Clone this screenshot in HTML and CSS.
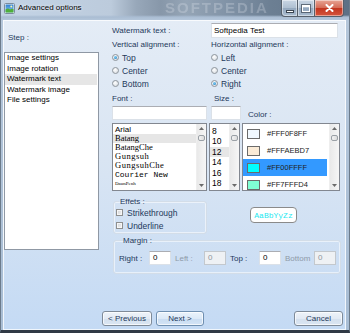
FILE: index.html
```html
<!DOCTYPE html>
<html>
<head>
<meta charset="utf-8">
<title>Advanced options</title>
<link rel="stylesheet" href="styles.css">
</head>
<body>
<div class="window">
  <div class="titlebar">
    <svg class="app-icon" width="11" height="11" viewBox="0 0 11 11">
      <defs>
        <linearGradient id="sky" x1="0" y1="0" x2="0" y2="1">
          <stop offset="0" stop-color="#2f7fd0"/>
          <stop offset="1" stop-color="#8fd0f2"/>
        </linearGradient>
      </defs>
      <rect x="0.5" y="0.5" width="10" height="10" rx="1" fill="#f4f7fa" stroke="#7c8c9c"/>
      <rect x="1.5" y="1.5" width="8" height="8" fill="url(#sky)"/>
      <path d="M1.5 9.5 L1.5 6.5 Q4 4.6 6 6.4 Q7.8 5.2 9.5 6 L9.5 9.5 Z" fill="#4fae3a"/>
      <circle cx="7.3" cy="3.4" r="1" fill="#fff6b0"/>
    </svg>
    <span class="title">Advanced options</span>
    <span class="glass-mark">SOFTPEDIA</span>
    <div class="caption-buttons">
      <div class="cbtn cmin"><span class="min-glyph"></span></div>
      <div class="cbtn cmax"><span class="max-glyph"></span></div>
      <div class="cbtn cclose">
        <svg width="9" height="8" viewBox="0 0 9 8"><path d="M1.5 1 L7.5 7 M7.5 1 L1.5 7" stroke="#fff" stroke-width="2" stroke-linecap="round"/></svg>
      </div>
    </div>
  </div>
  <div class="frame">
    <div class="client">
      <div class="main">
        <div class="left">
          <div class="step-label">Step :</div>
          <ul class="steps">
            <li>Image settings</li>
            <li>Image rotation</li>
            <li class="sel">Watermark text</li>
            <li>Watermark image</li>
            <li>File settings</li>
          </ul>
        </div>
        <div class="right">
          <div class="row-wm">
            <div class="lbl">Watermark text :</div>
            <div class="textbox">Softpedia Test</div>
          </div>
          <div class="row-align">
            <div class="col">
              <div class="lbl">Vertical alignment :</div>
              <div class="radio"><span class="rb on"></span>Top</div>
              <div class="radio"><span class="rb"></span>Center</div>
              <div class="radio"><span class="rb"></span>Bottom</div>
            </div>
            <div class="col">
              <div class="lbl">Horizontal alignment :</div>
              <div class="radio"><span class="rb"></span>Left</div>
              <div class="radio"><span class="rb"></span>Center</div>
              <div class="radio"><span class="rb on"></span>Right</div>
            </div>
          </div>
          <div class="row-fontlbl">
            <div class="lbl">Font :</div>
            <div class="lbl size-lbl">Size :</div>
          </div>
          <div class="row-inputs">
            <div class="textbox"></div>
            <div class="textbox"></div>
            <div class="lbl color-lbl">Color :</div>
          </div>
          <div class="row-lists">
            <div class="listbox">
              <ul class="items font-items">
                <li class="f-arial">Arial</li>
                <li class="f-batang sel">Batang</li>
                <li class="f-batang">BatangChe</li>
                <li class="f-gung">Gungsuh</li>
                <li class="f-gung">GungsuhChe</li>
                <li class="f-courier">Courier New</li>
                <li class="f-daun">DaunPenh</li>
              </ul>
              <div class="vscroll">
                <div class="arr"><svg width="5" height="3" viewBox="0 0 5 3"><path d="M0 3 L2.5 0 L5 3 Z" fill="#6b6b6b"/></svg></div>
                <div class="thumb"></div>
                <div class="track"></div>
                <div class="arr"><svg width="5" height="3" viewBox="0 0 5 3"><path d="M0 0 L2.5 3 L5 0 Z" fill="#6b6b6b"/></svg></div>
              </div>
            </div>
            <div class="listbox">
              <ul class="items size-items">
                <li>8</li>
                <li>10</li>
                <li class="sel">12</li>
                <li>14</li>
                <li>16</li>
                <li>18</li>
              </ul>
              <div class="vscroll">
                <div class="arr"><svg width="5" height="3" viewBox="0 0 5 3"><path d="M0 3 L2.5 0 L5 3 Z" fill="#6b6b6b"/></svg></div>
                <div class="thumb"></div>
                <div class="track"></div>
                <div class="arr"><svg width="5" height="3" viewBox="0 0 5 3"><path d="M0 0 L2.5 3 L5 0 Z" fill="#6b6b6b"/></svg></div>
              </div>
            </div>
            <div class="listbox">
              <ul class="items color-items">
                <li><span class="swatch" style="background:#F0F8FF"></span>#FFF0F8FF</li>
                <li><span class="swatch" style="background:#FAEBD7"></span>#FFFAEBD7</li>
                <li class="csel"><span class="swatch" style="background:#00FFFF"></span>#FF00FFFF</li>
                <li><span class="swatch" style="background:#7FFFD4"></span>#FF7FFFD4</li>
              </ul>
              <div class="vscroll">
                <div class="arr"><svg width="5" height="3" viewBox="0 0 5 3"><path d="M0 3 L2.5 0 L5 3 Z" fill="#6b6b6b"/></svg></div>
                <div class="thumb"></div>
                <div class="track"></div>
                <div class="arr"><svg width="5" height="3" viewBox="0 0 5 3"><path d="M0 0 L2.5 3 L5 0 Z" fill="#6b6b6b"/></svg></div>
              </div>
            </div>
          </div>
          <div class="row-effects">
            <fieldset class="group effets">
              <legend>Effets :</legend>
              <div class="check"><span class="cb"></span>Strikethrough</div>
              <div class="check"><span class="cb"></span>Underline</div>
            </fieldset>
            <div class="sample-wrap">
              <div class="sample">AaBbYyZz</div>
            </div>
          </div>
          <fieldset class="group margin">
            <legend>Margin :</legend>
            <div class="margin-row">
              <span class="mlbl w30">Right :</span>
              <span class="num">0</span>
              <span class="mlbl dis">Left :</span>
              <span class="num disabled">0</span>
              <span class="mlbl">Top :</span>
              <span class="num">0</span>
              <span class="mlbl dis">Bottom</span>
              <span class="num disabled">0</span>
            </div>
          </fieldset>
        </div>
      </div>
      <div class="buttons">
        <div class="btn w50">&lt; Previous</div>
        <div class="btn btn-default w48">Next &gt;</div>
        <div class="btn w49 cancel">Cancel</div>
      </div>
    </div>
  </div>
</div>
</body>
</html>
```

FILE: styles.css
```css
* { box-sizing: border-box; margin: 0; padding: 0; }
html, body { width: 350px; height: 333px; overflow: hidden; }
body {
  background: #2f3844;
  font-family: "Liberation Sans", Arial, sans-serif;
  font-size: 8px;
  color: #1e395b;
}
ul { list-style: none; }

.window { width: 350px; height: 333px; display: flex; flex-direction: column; }

/* ---------- title bar ---------- */
.titlebar {
  height: 20px;
  position: relative;
  display: flex;
  align-items: flex-start;
  padding: 2px 5px 0 3px;
  background:
    linear-gradient(rgba(169,188,210,0) 0, rgba(169,188,210,0) 15px, #aabdd3 17px, #b4c6da 20px),
    linear-gradient(90deg, #c4d4e6 0px, #bccbdc 110px, #98a8ba 135px, #8797a9 160px, #95a5b6 185px, #7f91a5 230px, #6c7f93 270px, #5d7085 350px);
  border-left: 1px solid #6c7b8b;
  border-right: 1px solid #6c7b8b;
}
.app-icon { margin-top: 1px; flex: none; }
.title {
  margin-left: 3px;
  line-height: 11px;
  color: #000;
  font-size: 8px;
  text-shadow: 0 0 3px rgba(255,255,255,0.9);
}
.glass-mark {
  position: absolute;
  left: 164px; top: 0px;
  font-size: 15px;
  line-height: 16px;
  font-weight: bold;
  letter-spacing: 2px;
  color: rgba(230,236,244,0.26);
  filter: blur(0.7px);
}
.caption-buttons {
  margin-left: auto;
  margin-top: -2px;
  display: flex;
  position: relative;
  z-index: 1;
}
.cbtn {
  height: 17px;
  border: 1px solid #56606c;
  border-top: none;
  display: flex;
  align-items: center;
  justify-content: center;
  box-shadow: inset 0 0 0 1px rgba(255,255,255,0.45);
}
.cmin { width: 17px; border-radius: 0 0 0 4px; background: linear-gradient(#c9d6e4, #aebfd1 50%, #94a8be 51%, #a8bbcf); }
.cmax { width: 17px; border-left: none; background: linear-gradient(#c9d6e4, #aebfd1 50%, #94a8be 51%, #a8bbcf); }
.cclose { width: 29px; border-left: none; border-radius: 0 0 4px 0; background: linear-gradient(#e8a595, #d46a55 50%, #c2351f 51%, #d5553c); }
.min-glyph { width: 8px; height: 3px; margin-top: 6px; background: #fff; border: 1px solid #3c4652; }
.max-glyph { width: 8px; height: 7px; border: 1px solid #fff; border-top-width: 2px; outline: 1px solid rgba(60,70,82,0.7); }

/* ---------- frame / client ---------- */
.frame {
  flex: 1;
  display: flex;
  padding: 0 3px 0 2px;
  background: linear-gradient(#b4c6da, #a8bdd4);
  border-left: 1px solid #6c7b8b;
  border-right: 1px solid #6c7b8b;
  border-bottom: 3px solid #303945;
}
.client {
  flex: 1;
  display: flex;
  flex-direction: column;
  background: linear-gradient(#e4ecf6, #d9e5f3 45%, #c4daf4);
  box-shadow: inset 0 0 0 1px rgba(255,255,255,0.75);
}
.main { flex: 1; display: flex; padding: 3px 0 0 1px; }

/* ---------- left steps ---------- */
.left { width: 95px; display: flex; flex-direction: column; }
.step-label { height: 29px; line-height: 29px; padding-left: 4px; }
.steps {
  height: 198px;
  background: #fff;
  border: 1px solid #8f98a4;
  color: #000;
}
.steps li { line-height: 10.6px; padding-left: 2px; margin: 0 1px 0 0; }
.steps li.sel { background: #e6e6e6; }

/* ---------- right panel ---------- */
.right { margin-left: 13px; width: 228px; display: flex; flex-direction: column; }
.lbl { color: #1e395b; }
.textbox {
  background: #fff;
  border: 1px solid #dbe1e8;
  border-top-color: #abadb3;
  color: #000;
  padding-left: 2px;
  line-height: 13px;
}
.row-wm { display: grid; grid-template-columns: 99px 127px; height: 15px; line-height: 15px; }
.row-wm .textbox { line-height: 13px; }
.row-align { display: grid; grid-template-columns: 99px 1fr; }
.row-align .lbl { line-height: 13px; height: 13px; }
.radio { height: 13px; display: flex; align-items: center; gap: 3px; color: #1e395b; font-size: 8.5px; }
.rb {
  width: 7px; height: 7px; border-radius: 50%;
  border: 1px solid #8e959c;
  background: radial-gradient(circle at 40% 35%, #ffffff, #dfe3e7 70%);
  display: flex; align-items: center; justify-content: center;
  flex: none;
}
.rb.on::after {
  content: "";
  width: 3px; height: 3px; border-radius: 50%;
  background: radial-gradient(circle at 40% 35%, #7fd0f5, #1b78c0);
}
.row-fontlbl { margin-top: 2px; height: 14px; line-height: 14px; display: grid; grid-template-columns: 99px 1fr; }
.size-lbl { padding-left: 3px; }
.row-inputs { height: 14px; display: grid; grid-template-columns: 95px 30px 1fr; column-gap: 4px; }
.color-lbl { align-self: end; line-height: 10px; padding-left: 3px; }

.row-lists { margin-top: 3px; height: 68px; display: grid; grid-template-columns: 95px 31px 98px; column-gap: 2px; }
.listbox { display: flex; background: #fff; border: 1px solid #828790; overflow: hidden; }
.items { flex: 1; color: #000; overflow: hidden; }
.font-items { padding-top: 1px; }
.font-items li { height: 9px; line-height: 9px; padding-left: 2px; white-space: nowrap; }
.font-items li.sel { background: #e6e6e6; }
.f-arial { font-family: "Liberation Sans", Arial, sans-serif; font-size: 8px; }
.f-batang { font-family: "Liberation Serif", serif; font-size: 8.5px; }
.f-gung { font-family: "Liberation Serif", serif; font-size: 8.5px; letter-spacing: 0.5px; }
.f-courier { font-family: "Liberation Mono", monospace; font-size: 8px; }
.f-daun { font-family: "Liberation Serif", serif; font-size: 5px; }
.size-items { padding-top: 2px; }
.size-items li { height: 10.4px; line-height: 10.4px; padding-left: 2px; font-size: 8.5px; }
.size-items li.sel { background: #e6e6e6; }
.color-items { padding-top: 1px; }
.color-items li {
  height: 17px; width: 84px;
  display: flex; align-items: center; gap: 7px; padding-left: 4px;
  font-size: 7.5px; color: #222;
}
.color-items li.csel { background: #3399ff; }
.swatch { width: 13px; height: 10px; border: 1px solid #6b6b6b; flex: none; }

.vscroll {
  width: 10px; flex: none;
  display: flex; flex-direction: column;
  background: linear-gradient(90deg, #e9e9e9, #f6f6f6);
  border-left: 1px solid #eeeeee;
}
.arr { height: 9px; display: flex; align-items: center; justify-content: center; }
.thumb {
  margin: 2px 1px 0;
  height: 6px;
  border: 1px solid #9aa0a6;
  border-radius: 2px;
  background: linear-gradient(90deg, #f3f3f3, #dcdcdc);
}
.track { flex: 1; }

/* ---------- effects ---------- */
.row-effects { margin-top: 6px; display: flex; }
.group {
  border: 1px solid #d3dde8;
  border-radius: 3px;
  box-shadow: inset 0 0 0 1px rgba(255,255,255,0.55);
}
.group legend { line-height: 9px; margin-left: 3px; padding: 0 1px; color: #1e395b; }
.effets { margin-left: 1px; width: 94px; padding: 0 0 1px 2px; }
.check { height: 13px; display: flex; align-items: center; gap: 4px; color: #1e395b; font-size: 8.5px; }
.cb {
  width: 7px; height: 7px; flex: none;
  border: 1px solid #8e8f8f;
  background: linear-gradient(135deg, #cfd2d5, #f4f4f4);
  box-shadow: inset 0 0 0 1px #f6f6f6;
}
.sample-wrap { flex: 1; display: flex; justify-content: center; padding-top: 10px; }
.sample {
  width: 47px; height: 16px;
  border: 1px solid #8a8a8a; border-radius: 4px;
  background: #fff;
  display: flex; align-items: center; justify-content: center;
  font-family: "Liberation Mono", monospace;
  font-size: 8px;
  color: #1ee8f0;
}

/* ---------- margin ---------- */
.margin { margin: 2px 0 0 1px; width: 226px; padding: 6px 0 8px 5px; }
.margin-row { display: flex; align-items: center; height: 14px; }
.mlbl { width: 29px; color: #1e395b; }
.mlbl.w30 { width: 30px; }
.mlbl.dis { color: #8e9aa8; }
.num {
  width: 22px; height: 14px; margin-right: 4px;
  background: #fff;
  border: 1px solid #dbe1e8; border-top-color: #abadb3;
  padding-left: 3px; line-height: 12px; color: #000;
}
.num.disabled { background: #eef1f4; border-color: #c3c8cd; color: #8d959c; }

/* ---------- buttons ---------- */
.buttons { height: 15px; margin-bottom: 4px; display: flex; gap: 4px; padding: 0 3px 0 99px; }
.btn {
  height: 15px;
  border: 1px solid #7e8a98;
  border-radius: 3px;
  background: linear-gradient(#eef3f9, #e2eaf4 50%, #d4e0ee 51%, #dae6f3);
  box-shadow: inset 0 0 0 1px rgba(255,255,255,0.7);
  display: flex; align-items: center; justify-content: center;
  color: #1e395b;
  font-size: 8px;
}
.btn-default { border-color: #6f8fb0; background: linear-gradient(#eaf3fc, #dce9f7 50%, #c9dcf1 51%, #d3e4f6); }
.w50 { width: 50px; }
.w48 { width: 48px; }
.w49 { width: 49px; }
.cancel { margin-left: auto; }
```
